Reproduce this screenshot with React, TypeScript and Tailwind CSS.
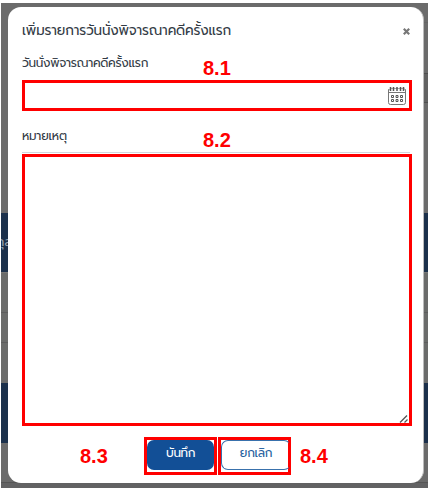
import React from 'react';

const thai = "font-['Prompt','Kanit','Noto_Sans_Thai','Loma','Noto_Sans',sans-serif]";
const mark = "font-['Liberation_Sans',sans-serif] text-[20px] leading-[20px] font-bold text-[#ff0000]";

function CalendarIcon() {
  return (
    <svg width="20" height="20" viewBox="0 0 20 20" fill="none" stroke="#777" strokeWidth="1">
      <path d="M2.5 3.5h-1v13q0 2 2 2h13q2 0 2-2v-13h-1M1.5 6.5h17" />
      <path d="M3 2.5h14.5" stroke="#aaa" />
      <path d="M3.5 1v4M6.5 1v4M10 1v4M13.5 1v4M16.5 1v4" stroke="#555" strokeWidth="1.5" />
      <path d="M4.5 9.5h2v2h-2zM9 9.5h2v2H9zM13.5 9.5h2v2h-2zM4.5 13.5h2v2h-2zM9 13.5h2v2H9zM13.5 13.5h2v2h-2z" stroke="#555" />
    </svg>
  );
}

function Backdrop() {
  return (
    <div className="flex h-[488px] flex-col bg-[#696969] pt-[3px]">
      <div className="ml-px flex h-[210px] flex-col items-end bg-[#6b6b6b]">
        <div className="mt-[19px] h-[51px] w-2 border-t border-[#646464]" />
        <div className="h-[30px] w-2 border-y border-[#4f4f4f] bg-[#626262]" />
      </div>
      <div className="ml-px h-[59px] overflow-hidden bg-[#1b304b] pt-[18px]">
        <div className={`-ml-[5px] text-[13px] leading-[22px] text-[#96a0ad] ${thai}`}>กุล</div>
      </div>
      <div className="ml-px h-10 border-t border-[#777] bg-[#6b6c6b]" />
      <div className="ml-px h-[31px] border-y border-[#5d5d5d] bg-[#6b6c6b]" />
      <div className="ml-px h-10 bg-[#6b6c6b]" />
      <div className="ml-px h-[60px] bg-[#1b304b]" />
      <div className="ml-px h-10 border-b border-[#555] bg-[#6b6b6b]" />
      <div className="ml-px h-[5px] bg-[#626263]" />
    </div>
  );
}

export default function App() {
  return (
    <main className={`relative h-[488px] w-[428px] overflow-hidden ${thai}`}>
      <div className="absolute inset-0">
        <Backdrop />
        <div className="absolute inset-x-0 top-0 h-[3px] bg-white" />
        <div className="absolute inset-y-0 left-0 w-px bg-white" />
      </div>
      <section className="absolute top-[7px] left-2 flex h-[476px] w-[416px] flex-col rounded-[13px] border-r border-[#bbb] bg-white px-[14px] pr-[11px] text-[#333b45]">
        <header className="flex h-[47px] items-center justify-between pr-[2px]">
          <h1 className="pt-[2px] text-[13.5px] tracking-[-0.15px] whitespace-nowrap">เพิ่มรายการวันนั่งพิจารณาคดีครั้งแรก</h1>
          <svg className="mt-px" width="7" height="7" viewBox="0 0 7 7" stroke="#777" strokeWidth="2.2"><path d="m.8.8 5.4 5.4M6.2.8.8 6.2" /></svg>
        </header>
        <div className="relative flex h-[26px]">
          <label className="text-[12px] leading-[19px] tracking-[-0.3px] whitespace-nowrap">วันนั่งพิจารณาคดีครั้งแรก</label>
          <span className={`absolute top-1 left-[181px] ${mark}`}>8.1</span>
        </div>
        <div className="flex h-[31px] w-[390px] items-center justify-end border-[3px] border-[#ff0000] pr-[2px]">
          <CalendarIcon />
        </div>
        <div className="relative flex h-[43px] w-[390px] items-start pt-4">
          <label className="text-[12px] leading-[18px] tracking-[-0.25px] whitespace-nowrap">หมายเหตุ</label>
          <span className={`absolute top-[19px] left-[181px] ${mark}`}>8.2</span>
          <div className="absolute top-[41px] left-0 h-px w-[388px] bg-[#d2d6dc]" />
        </div>
        <div className="flex h-[272px] w-[390px] items-end justify-end border-[3px] border-[#ff0000]">
          <svg width="10" height="8" viewBox="0 0 10 8" stroke="#555" strokeWidth="1.3"><path d="m1 7.5 7-7M5.5 7.5l3-3" /></svg>
        </div>
        <footer className="mt-[11px] flex h-[38px] items-start">
          <span className={`mt-[9px] ml-[58px] w-[64px] ${mark}`}>8.3</span>
          <div className="h-[38px] w-[73px] border-[3px] border-[#ff0000]">
            <button className="block h-[30px] w-[67px] rounded-[7px] bg-[#124f96] pb-1 text-[12px] tracking-[-0.4px] text-white">บันทึก</button>
          </div>
          <div className="ml-px h-[38px] w-[73px] border-[3px] border-[#ff0000]">
            <button className="block h-[30px] w-[70px] rounded-[7px] border border-r-transparent border-[#3971ac] pb-1 text-[12px] tracking-[-0.3px] text-[#265f9e]">ยกเลิก</button>
          </div>
          <span className={`mt-[9px] ml-[9px] ${mark}`}>8.4</span>
        </footer>
      </section>
    </main>
  );
}
